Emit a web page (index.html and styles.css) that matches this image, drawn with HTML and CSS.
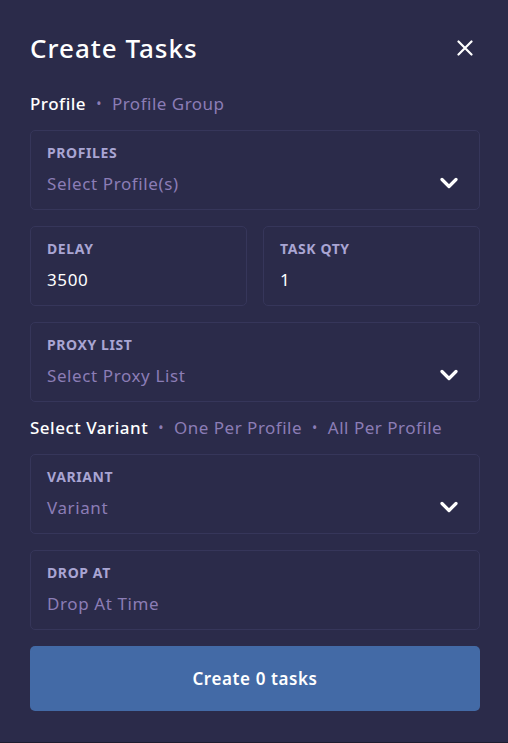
FILE: index.html
```html
<!DOCTYPE html>
<html lang="en">
<head>
  <meta charset="UTF-8">
  <title>Create Tasks</title>
  <link rel="stylesheet" href="styles.css">
</head>
<body>

<div class="modal">
  <div class="header">
    <div class="title">Create Tasks</div>
    <svg class="close" width="16" height="16" viewBox="0 0 16 16">
      <path d="M1.5 1.5 L14.5 14.5 M14.5 1.5 L1.5 14.5" stroke="#fff" stroke-width="2.2" stroke-linecap="round"/>
    </svg>
  </div>

  <div class="tabs">
    <span class="tab active">Profile</span>
    <span class="dot">•</span>
    <span class="tab">Profile Group</span>
  </div>

  <div class="field">
    <div class="label">PROFILES</div>
    <div class="value-row">
      <div class="value placeholder">Select Profile(s)</div>
      <svg class="chevron" width="18" height="12" viewBox="0 0 18 12">
        <path d="M2 2.5 L9 9.5 L16 2.5" fill="none" stroke="#fff" stroke-width="3.2" stroke-linecap="round" stroke-linejoin="round"/>
      </svg>
    </div>
  </div>

  <div class="row">
    <div class="field">
      <div class="label">DELAY</div>
      <div class="value-row">
        <div class="value">3500</div>
      </div>
    </div>
    <div class="field">
      <div class="label">TASK QTY</div>
      <div class="value-row">
        <div class="value">1</div>
      </div>
    </div>
  </div>

  <div class="field">
    <div class="label">PROXY LIST</div>
    <div class="value-row">
      <div class="value placeholder">Select Proxy List</div>
      <svg class="chevron" width="18" height="12" viewBox="0 0 18 12">
        <path d="M2 2.5 L9 9.5 L16 2.5" fill="none" stroke="#fff" stroke-width="3.2" stroke-linecap="round" stroke-linejoin="round"/>
      </svg>
    </div>
  </div>

  <div class="tabs variant-tabs">
    <span class="tab active">Select Variant</span>
    <span class="dot">•</span>
    <span class="tab">One Per Profile</span>
    <span class="dot">•</span>
    <span class="tab">All Per Profile</span>
  </div>

  <div class="field">
    <div class="label">VARIANT</div>
    <div class="value-row">
      <div class="value placeholder">Variant</div>
      <svg class="chevron" width="18" height="12" viewBox="0 0 18 12">
        <path d="M2 2.5 L9 9.5 L16 2.5" fill="none" stroke="#fff" stroke-width="3.2" stroke-linecap="round" stroke-linejoin="round"/>
      </svg>
    </div>
  </div>

  <div class="field">
    <div class="label">DROP AT</div>
    <div class="value-row">
      <div class="value placeholder">Drop At Time</div>
    </div>
  </div>

  <button class="submit">Create 0 tasks</button>
</div>

</body>
</html>
```

FILE: styles.css
```css
body {
  margin: 0;
  background: #2b2b4a;
  font-family: 'Noto Sans', sans-serif;
  color: #fff;
}

.modal {
  width: 508px;
  height: 743px;
  box-sizing: border-box;
  padding: 30px 28px 0 30px;
  background: #2b2b4a;
  border-bottom: 1px solid #1d1d30;
}

.header {
  display: flex;
  justify-content: space-between;
  align-items: center;
  height: 36px;
}

.title {
  font-size: 26px;
  font-weight: 500;
  letter-spacing: 1px;
}

.close {
  margin-right: 7px;
}

.tabs {
  display: flex;
  align-items: center;
  gap: 10px;
  height: 24px;
  margin: 25px 0 15px;
  font-size: 17px;
  letter-spacing: 0.5px;
}

/* collapses with the field's 16px bottom margin */
.variant-tabs {
  margin: -3px 0 15px;
}

.tab {
  color: #8b7db6;
}

.tab.active {
  color: #fff;
  font-weight: 500;
}

.dot {
  color: #8b7db6;
  font-size: 14px;
}

.field {
  height: 80px;
  box-sizing: border-box;
  border: 1px solid #36365a;
  border-radius: 5px;
  padding: 13px 21px 0 16px;
  margin-bottom: 16px;
}

.label {
  font-size: 14px;
  font-weight: 700;
  line-height: 18px;
  letter-spacing: 0.6px;
  color: #a9a5d3;
}

.value-row {
  display: flex;
  justify-content: space-between;
  align-items: center;
  height: 24px;
  margin-top: 9px;
}

.value {
  font-size: 17px;
  letter-spacing: 0.6px;
  color: #fff;
}

.value.placeholder {
  color: #8b7db6;
}

.row {
  display: flex;
  gap: 16px;
}

.row .field {
  flex: 1;
}

.submit {
  display: block;
  width: 100%;
  height: 65px;
  border: none;
  border-radius: 5px;
  background: #436aa6;
  color: #fff;
  font-family: inherit;
  font-size: 17px;
  font-weight: 600;
  letter-spacing: 0.6px;
}
```
